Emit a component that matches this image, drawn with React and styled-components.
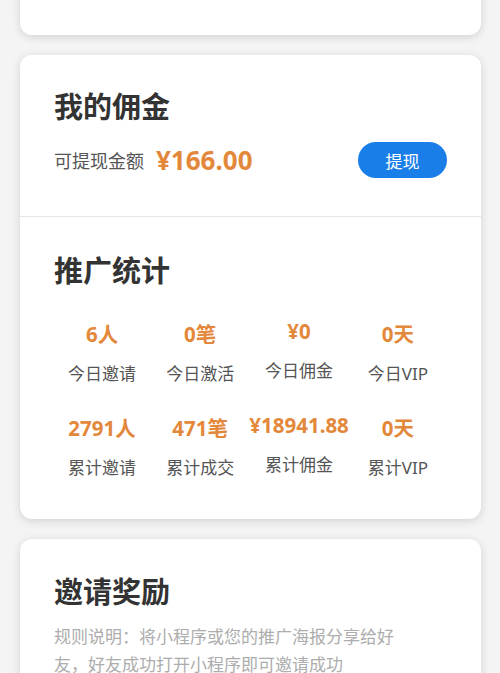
import React from "react";
import styled, { createGlobalStyle } from "styled-components";

const GlobalStyle = createGlobalStyle`
  html, body {
    margin: 0;
    padding: 0;
    background: #f4f4f4;
    font-family: "Noto Sans", "Noto Sans CJK SC", sans-serif;
  }
`;

const Page = styled.div`
  display: flex;
  flex-direction: column;
  gap: 20px;
  padding: 0 19px 0 20px;
  margin-top: -50px;
  overflow: hidden;
  height: 723px;
  box-sizing: border-box;
`;

const Card = styled.div`
  background: #fff;
  border-radius: 12px;
  box-shadow: 0 2px 10px rgba(0, 0, 0, 0.14);
  min-height: ${(props) => props.minHeight || 0}px;
  flex-shrink: 0;
`;

const Section = styled.div`
  padding: ${(props) => props.padding};
  border-top: ${(props) => (props.divider ? "1px solid #e6e6e6" : "none")};
`;

const Title = styled.h2`
  margin: 0;
  font-size: 29px;
  font-weight: 700;
  color: #333;
  line-height: 36px;
`;

const BalanceRow = styled.div`
  display: flex;
  align-items: center;
  justify-content: space-between;
  margin-top: 17px;
`;

const Balance = styled.div`
  display: flex;
  align-items: center;
  gap: 12px;
`;

const Label = styled.span`
  font-size: 18px;
  color: #555;
`;

const Amount = styled.span`
  font-size: 26px;
  font-weight: 700;
  color: #e3883a;
`;

const Button = styled.button`
  width: 89px;
  height: 36px;
  border: none;
  border-radius: 18px;
  background: #1a7ee8;
  color: #fff;
  font-family: inherit;
  font-size: 17px;
  padding: 0;
`;

const Grid = styled.div`
  display: grid;
  grid-template-columns: repeat(4, 1fr);
  row-gap: 27px;
  margin-top: 32px;
  width: 394px;
  margin-left: -1px;
`;

const Stat = styled.div`
  display: flex;
  flex-direction: column;
  align-items: center;
  gap: 13px;
  transform: translateY(${(props) => (props.lift ? "-3px" : "0")});
`;

const Value = styled.span`
  font-size: 20.5px;
  font-weight: 700;
  color: #e3883a;
  line-height: 26px;
  white-space: nowrap;
`;

const StatLabel = styled.span`
  font-size: 17px;
  color: #555;
  line-height: 28px;
  white-space: nowrap;
`;

const Rule = styled.p`
  margin: 13px 0 0;
  font-size: 17px;
  line-height: 28px;
  color: #adadad;
  width: 370px;
`;

const stats = [
  { value: "6人", label: "今日邀请" },
  { value: "0笔", label: "今日激活" },
  { value: "¥0", label: "今日佣金", lift: true },
  { value: "0天", label: "今日VIP" },
  { value: "2791人", label: "累计邀请" },
  { value: "471笔", label: "累计成交" },
  { value: "¥18941.88", label: "累计佣金", lift: true },
  { value: "0天", label: "累计VIP" },
];

export default function App() {
  return (
    <>
      <GlobalStyle />
      <Page>
        <Card minHeight={85} />
        <Card>
          <Section padding="34px 34px 38px">
            <Title>我的佣金</Title>
            <BalanceRow>
              <Balance>
                <Label>可提现金额</Label>
                <Amount>¥166.00</Amount>
              </Balance>
              <Button>提现</Button>
            </BalanceRow>
          </Section>
          <Section divider padding="36px 34px 37px">
            <Title>推广统计</Title>
            <Grid>
              {stats.map((s, i) => (
                <Stat key={i} lift={s.lift}>
                  <Value>{s.value}</Value>
                  <StatLabel>{s.label}</StatLabel>
                </Stat>
              ))}
            </Grid>
          </Section>
        </Card>
        <Card>
          <Section padding="35px 34px 30px">
            <Title>邀请奖励</Title>
            <Rule>规则说明：将小程序或您的推广海报分享给好友，好友成功打开小程序即可邀请成功</Rule>
          </Section>
        </Card>
      </Page>
    </>
  );
}
